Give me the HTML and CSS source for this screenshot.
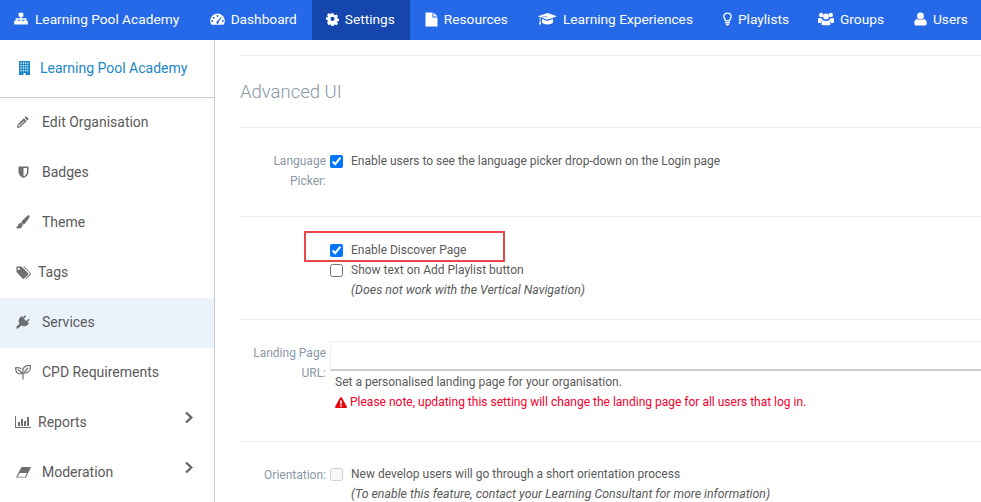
FILE: index.html
```html
<!DOCTYPE html>
<html lang="en">
<head>
<meta charset="utf-8">
<title>Advanced UI</title>
<link rel="stylesheet" href="styles.css">
</head>
<body>
<nav class="topnav">
  <a class="nav-item nav-first"><svg class="ico" width="14" height="14" viewBox="0 0 14 14"><path d="M4.700 .8h4.600v3.900H7.700V6.300H12.400v2.400h1.400v3.900H9.200V8.700h1.400V7.700H7.700v1h1.500v3.900H4.800V8.700h1.500v-1H3.400v1h1.400v3.900H.2V8.700h1.400V6.300h4.700V4.700H4.700z"/></svg>Learning Pool Academy</a>
  <a class="nav-item"><svg class="ico" width="15" height="14" viewBox="0 0 15 14"><path fill-rule="evenodd" d="M7.500 1.500A7.300 7.300 0 0 0 .2 8.800c0 1.600.5 2.900 1.300 3.900h12c.8-1 1.300-2.300 1.300-3.900a7.300 7.300 0 0 0-7.300-7.300zM7.500 3a1 1 0 1 1 0 2 1 1 0 0 1 0-2zM3.700 4.700a1 1 0 1 1 0 2 1 1 0 0 1 0-2zM2.200 8a1 1 0 1 1 0 2 1 1 0 0 1 0-2zm10.600 0a1 1 0 1 1 0 2 1 1 0 0 1 0-2zM11 5l.9.500-3.300 4.200a1.300 1.300 0 1 1-1.500-.4z"/></svg>Dashboard</a>
  <a class="nav-item nav-active"><svg class="ico" width="13" height="14" viewBox="0 0 14 14"><path fill-rule="evenodd" d="M5.700.5h2.600l.4 1.900 1.100.5 1.700-1 1.800 1.800-1 1.700.5 1.100 1.900.4v2.600l-1.900.4-.5 1.100 1 1.700-1.800 1.800-1.700-1-1.100.5-.4 1.900H5.700l-.4-1.900-1.100-.5-1.700 1L.7 11.200l1-1.700-.5-1.100L-.7 8V5.400l1.900-.4.500-1.100-1-1.700L2.500.4l1.700 1 1.100-.5zM7 4.600a2.400 2.400 0 1 0 0 4.800 2.400 2.400 0 0 0 0-4.800z" transform="translate(.5 .3) scale(.93)"/></svg>Settings</a>
  <a class="nav-item"><svg class="ico" width="13" height="15" viewBox="0 0 13 15"><path d="M.5.500h7v5h5v9H.5zM8.500.5l4 4h-4z"/></svg>Resources</a>
  <a class="nav-item"><svg class="ico" width="19" height="14" viewBox="0 0 19 14"><path d="M9.500 1 19 4.300l-9.500 3.400L3.500 5.500 9.400 4.300 9.200 3.800 2.500 5.300v3.900l.6 3.300H1l.7-3.300V5L0 4.300zM4 7l5.500 1.900L15 7v3.200c0 1.200-2.500 2.300-5.500 2.300S4 11.400 4 10.200z"/></svg>Learning Experiences</a>
  <a class="nav-item nav-play"><svg class="ico" width="9" height="14" viewBox="0 0 9 14"><path fill-rule="evenodd" d="M4.500.5C2 .5.200 2.200.200 4.400c0 2.100 1.600 3 1.800 5h5c.2-2 1.800-2.900 1.800-5C8.800 2.200 7 .5 4.500.5zm0 1.300c1.600 0 3 1.100 3 2.600 0 1.500-1.400 2.500-1.800 3.800H3.300C2.900 6.900 1.500 5.900 1.500 4.400c0-1.500 1.400-2.600 3-2.600zM2.200 10h4.600v1.200H2.200zm.3 1.700h4l-.7 1.300-1.300.7-1.300-.7z"/></svg>Playlists</a>
  <a class="nav-item"><svg class="ico" width="16" height="14" viewBox="0 0 16 14"><circle cx="3.200" cy="3" r="2.200"/><circle cx="12.800" cy="3" r="2.200"/><circle cx="8" cy="4.400" r="2.900"/><path d="M0 6.200h3.600c.4.900.9 1.500 1.500 1.900-1.300.4-2 1.400-2.100 2.900H.8C.2 11 0 10.500 0 9.800zM16 6.200h-3.600c-.4.900-.9 1.500-1.500 1.900 1.300.4 2 1.400 2.100 2.900h2.200c.6 0 .8-.5.800-1.200zM5 8.200c1.800 1 4.200 1 6 0 1 .3 1.500 1.500 1.500 3.300 0 1-.6 1.800-1.600 1.800H5.100c-1 0-1.600-.8-1.600-1.800 0-1.800.5-3 1.500-3.300z"/></svg>Groups</a>
  <a class="nav-item"><svg class="ico" width="13" height="14" viewBox="0 0 13 14"><circle cx="6.500" cy="4" r="3.400"/><path d="M3.100 6.900c1.900 1.500 4.900 1.500 6.800 0 1.900.2 2.800 2 2.800 4.300 0 1.400-.8 2.300-2 2.300H2.300c-1.200 0-2-.9-2-2.300 0-2.300.9-4.100 2.800-4.300z"/></svg>Users</a>
</nav>
<div class="layout">
  <aside class="sidebar">
    <div class="side-head"><svg class="head-ico" width="11" height="14" viewBox="0 0 11 14"><path fill-rule="evenodd" d="M0 0h11v14H6.500v-2h-2v2H0zm1.500 1.500v1.300h1.300V1.500zm2.300 0v1.300h1.300V1.500zm2.200 0v1.300h1.300V1.500zm2.300 0v1.300h1V1.500zM1.500 4v1.300h1.300V4zm2.300 0v1.300h1.300V4zM6 4v1.300h1.300V4zm2.300 0v1.300h1V4zM1.500 6.500v1.300h1.300V6.500zm2.300 0v1.300h1.300V6.500zm2.200 0v1.300h1.300V6.500zm2.300 0v1.300h1V6.500zM1.500 9v1.300h1.300V9zm2.300 0v1.300h1.300V9zM6 9v1.300h1.300V9zm2.300 0v1.300h1V9z"/></svg>Learning Pool Academy</div>
    <ul class="side-list">
      <li class="side-item"><span class="slot"><svg width="12" height="12" viewBox="0 0 12 12"><path fill-rule="evenodd" d="M9 .2 11.800 3l-1.400 1.400-2.800-2.800zM6.900 2.300l2.800 2.800-6.200 6.200L0 12l.7-3.500zM2 8.300l-.5 2.200 2.200-.5-.4-.6L7.500 5.300 7 4.800 2.800 8.900z"/></svg></span>Edit Organisation</li>
      <li class="side-item"><span class="slot"><svg width="11" height="12" viewBox="0 0 11 12"><path fill-rule="evenodd" d="M.5.500h10v5.500c0 3-2.500 5-5 6C3 11 .5 9 .5 6zM5.500 2v8.400c1.500-.8 3.500-2.300 3.500-4.400V2z"/></svg></span>Badges</li>
      <li class="side-item"><span class="slot"><svg width="14" height="14" viewBox="0 0 14 14"><path d="M12.300.3c.7 0 1.400.5 1.400 1.200 0 .5-.3 1-.6 1.400L9 8.400c-.5.600-1 1-1.700 1L5.300 7.500c0-.7.400-1.300.9-1.800L11 1c.400-.4.800-.7 1.300-.7zM4.900 8c.9.100 1.700.9 1.800 1.800 0 2.200-1.700 3.800-3.900 3.800-1.200 0-2.500-.5-2.800-1.500.8 0 1.500-.3 1.700-1.200.3-1.400 1.500-2.900 3.200-2.900z"/></svg></span>Theme</li>
      <li class="side-item side-tight"><span class="slot"><svg width="15" height="13" viewBox="0 0 15 13"><path fill-rule="evenodd" d="M.5.500h5L12 7c.5.500.5 1.200 0 1.700l-3.800 3.800c-.5.500-1.200.5-1.700 0L.5 6zm2.300 1.300a1.100 1.100 0 1 0 0 2.200 1.100 1.100 0 0 0 0-2.200zM7 .5h1.400l6.200 6.500c.5.500.5 1.200 0 1.700l-3.800 3.800c-.4.400-1 .4-1.400.1l3.900-4c.6-.6.600-1.400 0-2z"/></svg></span>Tags</li>
      <li class="side-item side-current"><span class="slot"><svg width="14" height="14" viewBox="0 0 14 14"><path d="M9 .2 10.200 1.300 7.900 3.700 10.300 6l2.300-2.300L13.800 4.800 11.500 7.100 13 8.500 11.800 9.700c-1.800 1.800-4.500 2.100-6.500.8l-3.100 3.100H.4v-1.800l3.100-3.100C2.200 6.700 2.500 4 4.300 2.200L5.500 1l1.300 1.500z"/></svg></span>Services</li>
      <li class="side-item"><span class="slot"><svg width="16" height="15" viewBox="0 0 16 15"><path d="M8 14.500V7.500M8 8.500C5.500 9 3 8.800 1.800 7.300.8 6 .6 4 .6 2.800c2.200-.4 4.500-.2 5.700 1.200M8 8.500c-.7-3.400 0-6 2.600-7.200 1.500-.7 3.300-.8 4.700-.8.300 2.500-.2 5-1.800 6.300-1.300 1-3.500 1.700-5.500 1.700zM3 4.500l4 3.500M13 3 9 7.500" fill="none" stroke="#6f6f6f" stroke-width="1.200"/></svg></span>CPD Requirements</li>
      <li class="side-item side-tight side-expand"><span class="side-label"><span class="slot"><svg width="16" height="12" viewBox="0 0 16 12"><path d="M0 0h1v11h15v1H0zM3 6h2v4H3zM6 3h2v7H6zM9 5h2v5H9zM12 1h2v9h-2z"/></svg></span>Reports</span><svg class="chev" width="9" height="13" viewBox="0 0 9 13"><path d="M1.800.7 8 6.500l-6.200 5.800L.2 10.700 4.700 6.500.2 2.300z"/></svg></li>
      <li class="side-item side-expand"><span class="side-label"><span class="slot"><svg width="15" height="11" viewBox="0 0 15 11"><path fill-rule="evenodd" d="M5.500 0H15l-5 10.500H0zM1.500 9.700h7.600L11 6H4z"/></svg></span>Moderation</span><svg class="chev" width="9" height="13" viewBox="0 0 9 13"><path d="M1.800.7 8 6.500l-6.200 5.800L.2 10.700 4.700 6.500.2 2.300z"/></svg></li>
    </ul>
  </aside>
  <main class="content">
    <h1 class="title">Advanced UI</h1>
    <section class="row row-lang">
      <div class="label">Language Picker:</div>
      <div class="field">
        <label class="check"><input type="checkbox" checked>Enable users to see the language picker drop-down on the Login page</label>
      </div>
    </section>
    <section class="row row-discover">
      <div class="label"></div>
      <div class="field">
        <label class="check"><input type="checkbox" checked>Enable Discover Page</label>
        <label class="check"><input type="checkbox">Show text on Add Playlist button</label>
        <p class="note">(Does not work with the Vertical Navigation)</p>
      </div>
      <div class="callout"></div>
    </section>
    <section class="row row-url">
      <div class="label">Landing Page URL:</div>
      <div class="field">
        <input class="url" type="text">
        <p class="help help-first">Set a personalised landing page for your organisation.</p>
        <p class="help warn"><svg class="warn-ico" width="12" height="11" viewBox="0 0 12 11"><path fill-rule="evenodd" d="M6 0c.3 0 .6.200.8.500l5 9c.3.700-.1 1.500-.9 1.500H1.100c-.8 0-1.200-.8-.9-1.500l5-9C5.400.2 5.700 0 6 0zM5.100 3.400l.2 4h1.400l.2-4zM5.200 8.200v1.500h1.600V8.200z"/></svg>Please note, updating this setting will change the landing page for all users that log in.</p>
      </div>
    </section>
    <section class="row row-orient">
      <div class="label label-orient">Orientation:</div>
      <div class="field">
        <label class="check"><input type="checkbox" disabled>New develop users will go through a short orientation process</label>
        <p class="note">(To enable this feature, contact your Learning Consultant for more information)</p>
      </div>
    </section>
  </main>
</div>
</body>
</html>
```

FILE: styles.css
```css
* { box-sizing: border-box; }
html, body { margin: 0; height: 502px; overflow: hidden; background: #fff; }
body { font-family: Roboto, "Liberation Sans", sans-serif; font-size: 12px; color: #5a5a5a; }

.topnav { display: flex; height: 40px; background: #2569e8; }
.nav-item { display: flex; align-items: center; padding: 0 15px 2px; color: #fff; font-size: 13.7px; white-space: nowrap; }
.nav-first { padding: 0 15.500px 2px 14px; }
.nav-first .ico { margin-right: 7px; }
.nav-active { background: #1546ad; padding-left: 14px; }
.nav-play { padding-right: 14px; }
.ico { fill: #fff; margin-right: 6px; flex: none; }

.layout { display: flex; height: 462px; }
.sidebar { width: 215px; flex: none; border-right: 1px solid #ccc; }
.side-head { display: flex; align-items: center; height: 58px; padding: 0 0 2px 19px; border-bottom: 1px solid #ccc; color: #1b87c9; font-size: 14px; }
.head-ico { fill: #1b87c9; margin-right: 10px; }
.side-list { list-style: none; margin: 0; padding: 0; }
.side-item { display: flex; align-items: center; height: 50px; padding: 0 0 2px 15px; font-size: 14px; color: #5a5a5a; }
.slot { display: flex; justify-content: center; flex: none; width: 16px; margin-right: 11px; }
.slot svg { fill: #6f6f6f; flex: none; }
.side-tight .slot { margin-right: 7px; }
.side-current { background: #eaf2fb; }
.side-expand { justify-content: space-between; padding-right: 20px; }
.side-label { display: flex; align-items: center; }
.chev { fill: #666; margin-top: -9px; }

.content { flex: 1; min-width: 0; padding: 15px 0 0 25px; }
.title { margin: 0; padding: 22px 0 21px; border-top: 1px solid #eee; font-size: 18.5px; font-weight: 300; line-height: 28px; color: #8a97a6; }
.row { position: relative; display: flex; border-top: 1px solid #eee; line-height: 20px; }
.label { flex: none; width: 86px; text-align: right; color: #8a97a6; margin-right: 4px; }
.field { flex: 1; min-width: 0; }
.check { display: flex; align-items: center; height: 20px; white-space: nowrap; }
.check input { width: 13px; height: 13px; margin: 0 8px 0 0; accent-color: #0075ff; flex: none; }
.note { margin: 0; height: 20px; padding-left: 21px; font-size: 12.35px; font-style: italic; white-space: nowrap; }
.help { margin: 0; height: 20px; padding-left: 5px; white-space: nowrap; }
.help-first { margin-top: 1px; }
.warn { display: flex; align-items: center; color: #f5002d; }
.warn-ico { fill: #e8000b; margin-right: 3px; flex: none; }
.url { display: block; width: 100%; height: 30px; border: 0; border-top: 1px solid #f0f0f0; border-left: 1px solid #f0f0f0; border-bottom: 2px solid #ccc; background: #fff; }

.row-lang { padding: 23px 0 25px; }
.row-discover { padding: 23px 0 19px; }
.row-url { padding: 21px 0 29px; }
.row-url .label { margin-top: 2px; }
.row-orient { padding: 22px 0 0; }
.label-orient { padding-top: 1px; }

.callout { position: absolute; left: 64px; top: 14px; width: 201px; height: 31px; border: 2px solid #e8474c; }
```
